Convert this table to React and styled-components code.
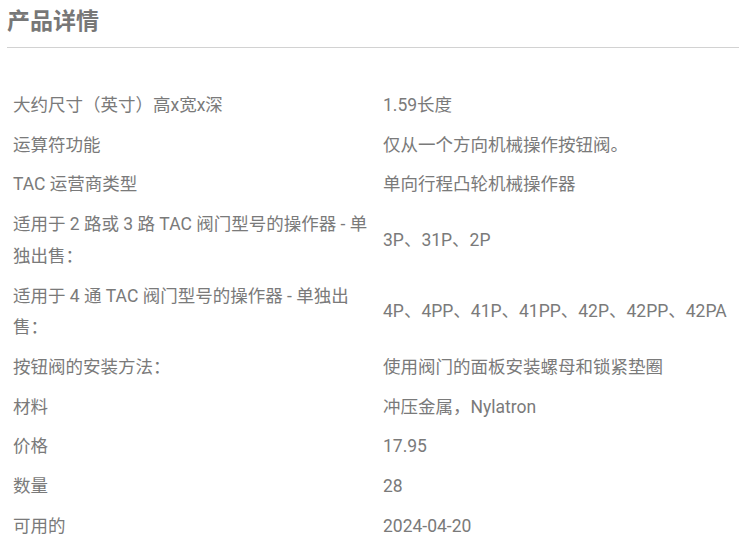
import React from 'react';
import styled, { createGlobalStyle } from 'styled-components';

const rows = [
  ['大约尺寸（英寸）高x宽x深', '1.59长度'],
  ['运算符功能', '仅从一个方向机械操作按钮阀。'],
  ['TAC 运营商类型', '单向行程凸轮机械操作器'],
  ['适用于 2 路或 3 路 TAC 阀门型号的操作器 - 单独出售：', '3P、31P、2P'],
  ['适用于 4 通 TAC 阀门型号的操作器 - 单独出售：', '4P、4PP、41P、41PP、42P、42PP、42PA'],
  ['按钮阀的安装方法：', '使用阀门的面板安装螺母和锁紧垫圈'],
  ['材料', '冲压金属，Nylatron'],
  ['价格', '17.95'],
  ['数量', '28'],
  ['可用的', '2024-04-20'],
];

const App = () => (
  <>
    <GlobalStyle />
    <Page>
      <Title>产品详情</Title>
      <Divider />
      <SpecTable>
        {rows.map(([label, value]) => (
          <SpecRow key={label}>
            <Label>{label}</Label>
            <Value>{value}</Value>
          </SpecRow>
        ))}
      </SpecTable>
    </Page>
  </>
);

const GlobalStyle = createGlobalStyle`
  body {
    margin: 0;
    background: #ffffff;
    font-family: Roboto, 'Noto Sans CJK SC', sans-serif;
  }
`;

const Page = styled.div`
  padding: 0 0 0 7px;
  color: #7a7a7a;
`;

const Title = styled.h2`
  margin: 0;
  padding-top: 6px;
  font-size: 23px;
  line-height: 32px;
  font-weight: 700;
  color: #777777;
`;

const Divider = styled.hr`
  margin: 9px 0 38px;
  border: none;
  border-top: 1px solid #d2d2d2;
`;

const SpecTable = styled.div`
  display: flex;
  flex-direction: column;
`;

const SpecRow = styled.div`
  display: grid;
  grid-template-columns: 370px 1fr;
  align-items: center;
  padding: 4px 0;
  font-size: 17.5px;
  line-height: 31.7px;
`;

const Label = styled.div`
  padding: 0 6px;
`;

const Value = styled.div`
  padding: 0 6px;
`;

export default App;
